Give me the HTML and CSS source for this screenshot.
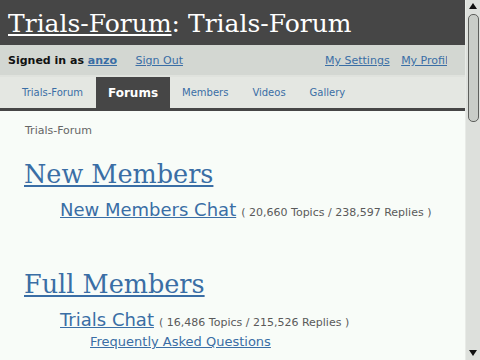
FILE: index.html
```html
<!DOCTYPE html>
<html lang="en">
<head>
    <meta charset="UTF-8">
    <meta name="viewport" content="width=device-width, initial-scale=1.0">
    <title>Trials-Forum</title>
    <link rel="stylesheet" href="styles.css">
</head>
<body>

<div class="header">
    <h1><a href="#">Trials-Forum</a>: Trials-Forum</h1>
</div>

<div class="userbar">
    <div class="user-left">
        <span class="signed">Signed in as <a href="#">anzo</a></span>
        <a href="#">Sign Out</a>
    </div>
    <div class="user-right">
        <a href="#">My Settings</a>
        <a href="#">My Profile</a>
    </div>
</div>

<div class="tabs">
    <a href="#">Trials-Forum</a>
    <a href="#" class="active">Forums</a>
    <a href="#">Members</a>
    <a href="#">Videos</a>
    <a href="#">Gallery</a>
</div>

<div class="content">
    <div class="crumbs">Trials-Forum</div>

    <div class="category">
        <h2><a href="#">New Members</a></h2>
        <div class="forum">
            <a href="#" class="forum-name">New Members Chat</a>
            <span class="stats">( 20,660 Topics / 238,597 Replies )</span>
        </div>
    </div>

    <div class="category">
        <h2><a href="#">Full Members</a></h2>
        <div class="forum">
            <a href="#" class="forum-name">Trials Chat</a>
            <span class="stats">( 16,486 Topics / 215,526 Replies )</span>
            <div class="subforums">
                <a href="#">Frequently Asked Questions</a>
            </div>
        </div>
    </div>

    <div class="category">
        <h2><a href="#">Events</a></h2>
        <div class="forum">
            <a href="#" class="forum-name">Competitions</a>
            <span class="stats">( 1,408 Topics / 12,655 Replies )</span>
        </div>
        <div class="forum">
            <a href="#" class="forum-name">Rides and Meets</a>
            <span class="stats">( 2,037 Topics / 19,442 Replies )</span>
        </div>
    </div>

    <div class="category">
        <h2><a href="#">Marketplace</a></h2>
        <div class="forum">
            <a href="#" class="forum-name">For Sale</a>
            <span class="stats">( 4,761 Topics / 22,309 Replies )</span>
        </div>
        <div class="forum">
            <a href="#" class="forum-name">Wanted</a>
            <span class="stats">( 1,126 Topics / 5,884 Replies )</span>
        </div>
    </div>
</div>

<!-- window scrollbar, drawn since the page is photographed without one -->
<div class="scrollbar">
    <span class="arrow up"></span>
    <span class="thumb"></span>
    <span class="arrow down"></span>
</div>

</body>
</html>
```

FILE: styles.css
```css
html, body {
    margin: 0;
    padding: 0;
}
body {
    font-family: "DejaVu Sans", Verdana, sans-serif;
    background-color: #f8fcf8;
    padding-right: 15px;
}
a {
    color: #3a6ea5;
}
.header {
    background: #464646;
    height: 45px;
    padding: 0 8px;
}
.header h1 {
    margin: 0;
    padding-top: 2px;
    font-family: "DejaVu Serif", Georgia, serif;
    font-weight: normal;
    font-size: 25px;
    line-height: 43px;
    color: #fff;
}
.header h1 a {
    color: #fff;
}
.userbar {
    display: flex;
    justify-content: space-between;
    height: 30px;
    line-height: 31px;
    padding: 0 18px 0 8px;
    background: #d3d7d2;
    border-bottom: 2px solid #dfe2dd;
    font-size: 11px;
}
.signed {
    font-weight: bold;
    color: #111;
    margin-right: 15px;
}
.user-right {
    width: 122px;
    white-space: nowrap;
    overflow: hidden;
}
.user-right a {
    margin-right: 8px;
}
.tabs {
    display: flex;
    height: 31px;
    padding-left: 10px;
    background: #e4e7e2;
    border-bottom: 3px solid #464646;
}
.tabs a {
    padding: 0 12px;
    font-size: 10px;
    line-height: 31px;
    text-decoration: none;
}
.tabs a.active {
    margin-left: 1px;
    padding: 0 12px;
    background: #464646;
    color: #fff;
    font-weight: bold;
    font-size: 12px;
    line-height: 33px;
}
.content {
    padding: 13px 24px 40px;
}
.crumbs {
    margin-left: 1px;
    font-size: 11px;
    line-height: 14px;
    color: #666;
}
.category h2 {
    margin: 21px 0 10px;
    font-family: "DejaVu Serif", Georgia, serif;
    font-weight: normal;
    font-size: 25.5px;
    line-height: 30px;
}
.category + .category h2 {
    margin-top: 45px;
}
.forum {
    margin: 0 0 4px 36px;
    line-height: 22px;
}
.forum-name {
    font-size: 18px;
}
.stats {
    font-size: 11px;
    color: #5a5a5a;
}
.subforums {
    margin-left: 30px;
    font-size: 13px;
    line-height: 16px;
}
.scrollbar {
    position: fixed;
    top: 0;
    right: 0;
    width: 15px;
    height: 100%;
    background: #dde0dc;
    border-left: 1px solid #e8ebe7;
    box-sizing: border-box;
    display: flex;
    flex-direction: column;
    align-items: center;
}
.arrow {
    width: 0;
    height: 0;
    border-left: 4px solid transparent;
    border-right: 4px solid transparent;
}
.arrow.up {
    margin-top: 3px;
    border-bottom: 6px solid #111;
}
.arrow.down {
    margin-top: auto;
    margin-bottom: 4px;
    border-top: 6px solid #111;
}
.thumb {
    width: 9px;
    height: 106px;
    margin-top: 5px;
    background: #c9cdc8;
    border: 1px solid #5e605d;
    border-radius: 5px;
}
```
